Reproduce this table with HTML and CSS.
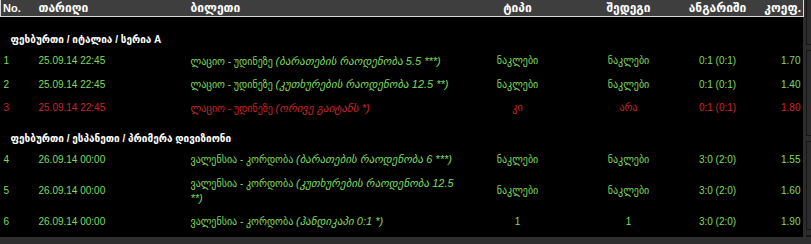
FILE: index.html
```html
<!DOCTYPE html>
<html lang="ka">
<head>
<meta charset="utf-8">
<title>ბილეთები</title>
<link rel="stylesheet" href="styles.css">
</head>
<body>
<div class="page">
  <main class="board">
    <table class="bets">
      <colgroup>
        <col class="c-no"><col class="c-date"><col class="c-ticket"><col class="c-type"><col class="c-result"><col class="c-score"><col class="c-coef">
      </colgroup>
      <thead>
        <tr>
          <th class="l no">No.</th>
          <th class="l">თარიღი</th>
          <th class="l">ბილეთი</th>
          <th>ტიპი</th>
          <th>შედეგი</th>
          <th>ანგარიში</th>
          <th class="r">კოეფ.</th>
        </tr>
      </thead>
      <tbody>
        <tr class="section"><td colspan="7">ფეხბურთი / იტალია / სერია A</td></tr>
        <tr class="win">
          <td>1</td><td>25.09.14 22:45</td>
          <td>ლაციო - უდინეზე <i>(ბარათების რაოდენობა 5.5 ***)</i></td>
          <td class="c">ნაკლები</td><td class="c">ნაკლები</td><td class="c">0:1 (0:1)</td><td class="r">1.70</td>
        </tr>
        <tr class="win">
          <td>2</td><td>25.09.14 22:45</td>
          <td>ლაციო - უდინეზე <i>(კუთხურების რაოდენობა 12.5 **)</i></td>
          <td class="c">ნაკლები</td><td class="c">ნაკლები</td><td class="c">0:1 (0:1)</td><td class="r">1.40</td>
        </tr>
        <tr class="lose">
          <td>3</td><td>25.09.14 22:45</td>
          <td>ლაციო - უდინეზე <i>(ორივე გაიტანს *)</i></td>
          <td class="c">კი</td><td class="c">არა</td><td class="c">0:1 (0:1)</td><td class="r">1.80</td>
        </tr>
        <tr class="section"><td colspan="7">ფეხბურთი / ესპანეთი / პრიმერა დივიზიონი</td></tr>
        <tr class="win">
          <td>4</td><td>26.09.14 00:00</td>
          <td>ვალენსია - კორდობა <i>(ბარათების რაოდენობა 6 ***)</i></td>
          <td class="c">ნაკლები</td><td class="c">ნაკლები</td><td class="c">3:0 (2:0)</td><td class="r">1.55</td>
        </tr>
        <tr class="win">
          <td>5</td><td>26.09.14 00:00</td>
          <td>ვალენსია - კორდობა <i>(კუთხურების რაოდენობა 12.5</i><br><i>**)</i></td>
          <td class="c">ნაკლები</td><td class="c">ნაკლები</td><td class="c">3:0 (2:0)</td><td class="r">1.60</td>
        </tr>
        <tr class="win">
          <td>6</td><td>26.09.14 00:00</td>
          <td>ვალენსია - კორდობა <i>(ჰანდიკაპი 0:1 *)</i></td>
          <td class="c">1</td><td class="c">1</td><td class="c">3:0 (2:0)</td><td class="r">1.90</td>
        </tr>
      </tbody>
    </table>
  </main>
  <aside class="side">
    <div class="panel p1"></div>
    <div class="panel p2"></div>
    <div class="panel p3"></div>
    <div class="panel p4"></div>
  </aside>
</div>
<footer class="foot"></footer>
</body>
</html>
```
FILE: styles.css
```css
html, body {
  margin: 0;
  padding: 0;
}
body {
  background: #2c2c2c;
  font-family: "Liberation Sans", "DejaVu Sans", Arial, sans-serif;
  font-size: 10px;
  width: 811px;
  height: 244px;
  overflow: hidden;
}
.page {
  display: flex;
  height: 237px;
}
.board {
  width: 803px;
  background: #000;
  flex: none;
}
.bets {
  width: 803px;
  border-collapse: collapse;
  table-layout: fixed;
}
.c-no { width: 35px; }
.c-date { width: 152px; }
.c-ticket { width: 273px; }
.c-type { width: 114px; }
.c-result { width: 108px; }
.c-score { width: 70px; }
.c-coef { width: 51px; }

.bets th {
  background: #3e3e3e;
  color: #fff;
  font-weight: bold;
  font-size: 12px;
  height: 16px;
  line-height: 16px;
  padding: 0 3px;
  text-align: center;
  border-bottom: 1px solid #d9d9d9;
  white-space: nowrap;
}
.bets th.no { font-size: 11px; }
.bets th:first-child { border-left: 1px solid #d9d9d9; padding-left: 2px; }
.bets th:last-child { border-right: 1px solid #d9d9d9; padding-right: 2px; }
.bets th.l { text-align: left; }
.bets th.r { text-align: right; }

.bets td {
  padding: 4.25px 3px;
  line-height: 14px;
  vertical-align: middle;
  text-align: left;
}
.bets td.c { text-align: center; }
.bets td.r { text-align: right; }
.bets i { font-style: italic; font-size: 11px; }

.win td { color: #7ddc5f; }
.lose td { color: #c8262a; }

.section td {
  color: #fff;
  font-weight: bold;
  padding: 11.5px 10px 2.5px;
}
.bets tbody .section:first-child td { padding-top: 16px; }

.side {
  flex: 1;
  display: flex;
  flex-direction: column;
  gap: 5px;
  padding-left: 3px;
}
.panel {
  border: 1px solid #161616;
  border-right: none;
  background: #2c2c2c;
}
.p1 { height: 44px; border-top: none; }
.p2 { height: 84px; }
.p3 { height: 87px; }
.p4 { flex: 1; }

.foot {
  height: 7px;
  background: #2e2e2e;
}
```
